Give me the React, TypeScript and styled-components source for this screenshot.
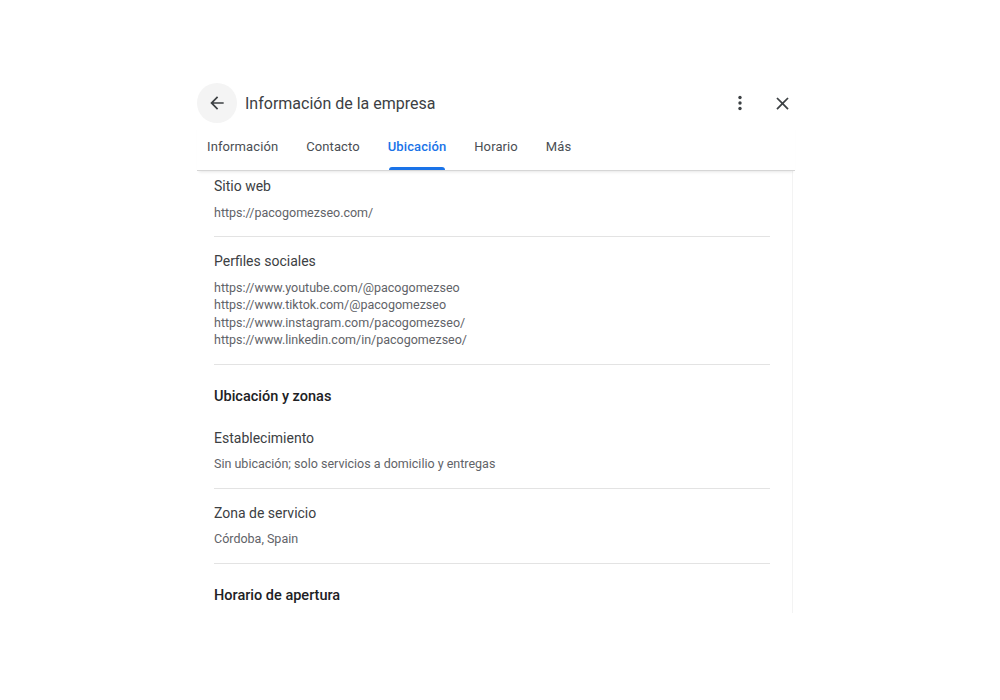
import React from "react";
import styled, { createGlobalStyle } from "styled-components";

const GlobalStyle = createGlobalStyle`
  body {
    margin: 0;
    background: #ffffff;
    font-family: Roboto, "Noto Sans", Arial, sans-serif;
  }
`;

const tabs = ["Información", "Contacto", "Ubicación", "Horario", "Más"];
const activeTab = "Ubicación";

const socialLinks = [
  "https://www.youtube.com/@pacogomezseo",
  "https://www.tiktok.com/@pacogomezseo",
  "https://www.instagram.com/pacogomezseo/",
  "https://www.linkedin.com/in/pacogomezseo/",
];

export default function App() {
  return (
    <>
      <GlobalStyle />
      <SPanel>
        <SHeader>
          <SBackButton aria-label="Atrás">
            <svg width="20" height="20" viewBox="0 0 24 24">
              <path
                d="M20 11H7.83l5.59-5.59L12 4l-8 8 8 8 1.41-1.41L7.83 13H20v-2z"
                fill="#3c4043"
              />
            </svg>
          </SBackButton>
          <STitle>Información de la empresa</STitle>
          <SHeaderActions>
            <SIconButton aria-label="Más opciones">
              <svg width="24" height="24" viewBox="0 0 24 24">
                <circle cx="12" cy="6.5" r="1.7" fill="#3c4043" />
                <circle cx="12" cy="12" r="1.7" fill="#3c4043" />
                <circle cx="12" cy="17.5" r="1.7" fill="#3c4043" />
              </svg>
            </SIconButton>
            <SIconButton aria-label="Cerrar">
              <svg width="21" height="21" viewBox="0 0 24 24">
                <path
                  d="M19 6.41L17.59 5 12 10.59 6.41 5 5 6.41 10.59 12 5 17.59 6.41 19 12 13.41 17.59 19 19 17.59 13.41 12z"
                  fill="#3c4043"
                />
              </svg>
            </SIconButton>
          </SHeaderActions>
        </SHeader>
        <STabBar>
          {tabs.map((tab) => (
            <STab key={tab}>
              <STabLabel $active={tab === activeTab}>{tab}</STabLabel>
            </STab>
          ))}
        </STabBar>
        <SScroll>
          <SField>
            <SLabel>Sitio web</SLabel>
            <SValue>https://pacogomezseo.com/</SValue>
          </SField>
          <SDivider />
          <SField>
            <SLabel>Perfiles sociales</SLabel>
            <SValue>
              {socialLinks.map((link) => (
                <div key={link}>{link}</div>
              ))}
            </SValue>
          </SField>
          <SDivider />
          <SSectionHeading>Ubicación y zonas</SSectionHeading>
          <SField>
            <SLabel>Establecimiento</SLabel>
            <SValue>Sin ubicación; solo servicios a domicilio y entregas</SValue>
          </SField>
          <SDivider />
          <SField>
            <SLabel>Zona de servicio</SLabel>
            <SValue>Córdoba, Spain</SValue>
          </SField>
          <SDivider />
          <SSectionHeading>Horario de apertura</SSectionHeading>
        </SScroll>
      </SPanel>
    </>
  );
}

const SPanel = styled.div`
  width: 598px;
  margin: 83px 0 0 197px;
  display: flex;
  flex-direction: column;
`;

const SHeader = styled.div`
  display: flex;
  align-items: center;
  height: 40px;
`;

const SBackButton = styled.button`
  width: 40px;
  height: 40px;
  border-radius: 50%;
  border: none;
  background: #f4f4f4;
  display: flex;
  align-items: center;
  justify-content: center;
  padding: 0;
  cursor: pointer;
`;

const STitle = styled.h1`
  margin: 0 0 0 8px;
  font-size: 16px;
  font-weight: 400;
  color: #3c4043;
  flex: 1;
`;

const SHeaderActions = styled.div`
  display: flex;
  align-items: center;
  gap: 18px;
  margin-right: 1px;
`;

const SIconButton = styled.button`
  width: 24px;
  height: 24px;
  border: none;
  background: none;
  padding: 0;
  display: flex;
  align-items: center;
  justify-content: center;
  cursor: pointer;
`;

const STabBar = styled.div`
  display: flex;
  gap: 8px;
  height: 46px;
  margin-top: 1px;
  border-bottom: 1px solid #d6d6d6;
  box-shadow: 0 3px 3px -2px rgba(0, 0, 0, 0.1);
  position: relative;
  z-index: 1;
`;

const STab = styled.div`
  padding: 0 10px;
  display: flex;
  align-items: stretch;
`;

const STabLabel = styled.span<{ $active: boolean }>`
  position: relative;
  display: flex;
  align-items: center;
  padding-bottom: 1px;
  font-size: 13px;
  font-weight: ${({ $active }) => ($active ? 500 : 400)};
  letter-spacing: 0.1px;
  color: ${({ $active }) => ($active ? "#1a73e8" : "#4a4e53")};
  &::after {
    content: "";
    display: ${({ $active }) => ($active ? "block" : "none")};
    position: absolute;
    left: 1px;
    right: 1px;
    bottom: 0;
    height: 3px;
    border-radius: 3px 3px 0 0;
    background: #1a73e8;
  }
`;

const SScroll = styled.div`
  height: 437px;
  overflow: hidden;
  padding: 5px 22px 0 17px;
  border-right: 1px solid #f3f3f3;
  margin-right: 2px;
`;

const SField = styled.div`
  padding: 0;
`;

const SLabel = styled.div`
  font-size: 14px;
  line-height: 20px;
  color: #3c4043;
  margin-bottom: 7.5px;
`;

const SValue = styled.div`
  font-size: 12.5px;
  line-height: 17.5px;
  color: #5f6368;
`;

const SDivider = styled.div`
  height: 1px;
  background: #e3e3e3;
  margin: 15px 0 14px;
`;

const SSectionHeading = styled.h2`
  margin: 22px 0 21px;
  font-size: 14.5px;
  line-height: 20px;
  font-weight: 500;
  color: #202124;
`;
